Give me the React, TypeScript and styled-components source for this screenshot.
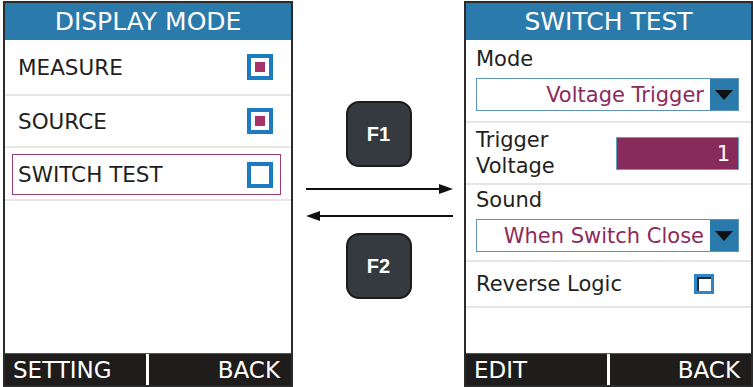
import React from "react";
import styled, { createGlobalStyle } from "styled-components";

const GlobalStyle = createGlobalStyle`
  html, body {
    margin: 0;
    padding: 0;
    background: #ffffff;
  }
  body {
    font-family: "DejaVu Sans", Verdana, sans-serif;
    color: #231f20;
  }
`;

const Page = styled.div`
  display: flex;
  width: 753px;
  height: 387px;
  padding-top: 1px;
  box-sizing: border-box;
  overflow: hidden;
`;

const Screen = styled.div<{ $left: number; $width: number }>`
  display: flex;
  flex-direction: column;
  margin-left: ${(p) => p.$left}px;
  width: ${(p) => p.$width}px;
  height: 386px;
  border: 2px solid #2b2b2b;
  box-sizing: border-box;
  background: #ffffff;
`;

const Header = styled.div`
  height: 37px;
  background: #2a7aab;
  color: #ffffff;
  font-size: 25px;
  line-height: 38px;
  text-align: center;
  flex-shrink: 0;
`;

const Body = styled.div`
  flex: 1;
  display: flex;
  flex-direction: column;
`;

const Row = styled.div<{ $height: number }>`
  display: flex;
  align-items: center;
  justify-content: space-between;
  height: ${(p) => p.$height}px;
  padding: 0 18px 0 13px;
  border-bottom: 2px solid #e6e6e6;
  box-sizing: border-box;
  font-size: 21.5px;
  flex-shrink: 0;
`;

const Highlight = styled.div`
  flex: 1;
  display: flex;
  align-items: center;
  justify-content: space-between;
  height: 41px;
  margin: 2px -8px 0 -6px;
  padding: 0 7px 0 5px;
  border: 1.5px solid #9b3d70;
  box-sizing: border-box;
`;

const Radio = styled.div<{ $checked: boolean }>`
  width: 26px;
  height: 26px;
  border: 4px solid #1b7cc3;
  box-sizing: border-box;
  display: flex;
  align-items: center;
  justify-content: center;

  &::after {
    content: "";
    width: 10px;
    height: 10px;
    background: ${(p) => (p.$checked ? "#a8326a" : "transparent")};
  }
`;

const Footer = styled.div`
  display: flex;
  height: 31px;
  background: #1f1c1c;
  border-top: 1px solid #5a5757;
  color: #ffffff;
  font-size: 23px;
  line-height: 32px;
  flex-shrink: 0;
`;

const SoftKey = styled.div<{ $align: "left" | "right"; $width?: number }>`
  ${(p) => (p.$width ? `width: ${p.$width}px;` : "flex: 1;")}
  text-align: ${(p) => p.$align};
  padding: ${(p) => (p.$align === "left" ? "0 0 0 8px" : "0 11px 0 0")};
  box-sizing: border-box;
  & + & {
    border-left: 3px solid #ffffff;
  }
`;

const Middle = styled.div`
  width: 171px;
  display: flex;
  flex-direction: column;
  align-items: center;
  padding-top: 100px;
  box-sizing: border-box;
`;

const Key = styled.div`
  width: 66px;
  height: 66px;
  border: 2px solid #1c1a1a;
  border-radius: 13px;
  background: #343a3f;
  box-sizing: border-box;
  display: flex;
  align-items: center;
  justify-content: center;
  color: #ffffff;
  font-family: "Liberation Sans", Arial, sans-serif;
  font-weight: bold;
  font-size: 20px;
`;

const Arrows = styled.svg`
  display: block;
  margin: 8px 0 12px 0;
`;

const Section = styled.div<{ $height: number; $top: number }>`
  display: flex;
  flex-direction: column;
  height: ${(p) => p.$height}px;
  padding: ${(p) => p.$top}px 12px 0 10px;
  border-bottom: 2px solid #e6e6e6;
  font-size: 21px;
  box-sizing: border-box;
  flex-shrink: 0;
`;

const Label = styled.div`
  line-height: 26px;
`;

const Select = styled.div`
  display: flex;
  height: 33px;
  margin-top: 6px;
  border: 1px solid #5d93bb;
  box-sizing: border-box;
`;

const SelectValue = styled.div`
  flex: 1;
  text-align: right;
  padding-right: 6px;
  color: #8b2a5c;
  font-size: 21px;
  line-height: 32px;
`;

const SelectArrow = styled.div`
  width: 28px;
  background: #2a7aab;
  display: flex;
  align-items: center;
  justify-content: center;

  &::after {
    content: "";
    border-left: 9px solid transparent;
    border-right: 9px solid transparent;
    border-top: 10px solid #111111;
  }
`;

const InlineSection = styled.div<{ $height: number }>`
  display: flex;
  align-items: center;
  justify-content: space-between;
  height: ${(p) => p.$height}px;
  padding: 0 12px 0 10px;
  border-bottom: 2px solid #e6e6e6;
  font-size: 21px;
  box-sizing: border-box;
  flex-shrink: 0;
`;

const NumberField = styled.div`
  width: 123px;
  height: 33px;
  background: #872c5a;
  border: 1px solid #6a9fc4;
  box-sizing: border-box;
  color: #ffffff;
  text-align: right;
  padding-right: 8px;
  line-height: 32px;
`;

const Check = styled.div`
  width: 20px;
  height: 20px;
  margin-right: 25px;
  border: 3px solid #2f86c6;
  box-shadow: inset 2px 2px 0 #1f2a33;
  background: #ffffff;
  box-sizing: border-box;
`;

const Spacer = styled.div`
  flex: 1;
`;

const App = () => (
  <>
    <GlobalStyle />
    <Page>
      <Screen $left={3} $width={290}>
        <Header>DISPLAY MODE</Header>
        <Body>
          <Row $height={56}>
            MEASURE
            <Radio $checked />
          </Row>
          <Row $height={52}>
            SOURCE
            <Radio $checked />
          </Row>
          <Row $height={53}>
            <Highlight>
              SWITCH TEST
              <Radio $checked={false} />
            </Highlight>
          </Row>
          <Spacer />
        </Body>
        <Footer>
          <SoftKey $align="left" $width={141}>SETTING</SoftKey>
          <SoftKey $align="right">BACK</SoftKey>
        </Footer>
      </Screen>

      <Middle>
        <Key>F1</Key>
        <Arrows width="150" height="46" viewBox="0 0 150 46">
          <line x1="2" y1="14" x2="138" y2="14" stroke="#111" strokeWidth="2" />
          <polygon points="149,14 135,9 135,19" fill="#111" />
          <line x1="12" y1="41" x2="149" y2="41" stroke="#111" strokeWidth="2" />
          <polygon points="2,41 16,36 16,46" fill="#111" />
        </Arrows>
        <Key>F2</Key>
      </Middle>

      <Screen $left={0} $width={289}>
        <Header>SWITCH TEST</Header>
        <Body>
          <Section $height={83} $top={6}>
            <Label>Mode</Label>
            <Select>
              <SelectValue>Voltage Trigger</SelectValue>
              <SelectArrow />
            </Select>
          </Section>
          <InlineSection $height={62}>
            <Label>
              Trigger
              <br />
              Voltage
            </Label>
            <NumberField>1</NumberField>
          </InlineSection>
          <Section $height={77} $top={2}>
            <Label>Sound</Label>
            <Select>
              <SelectValue>When Switch Close</SelectValue>
              <SelectArrow />
            </Select>
          </Section>
          <InlineSection $height={46}>
            Reverse Logic
            <Check />
          </InlineSection>
          <Spacer />
        </Body>
        <Footer>
          <SoftKey $align="left" $width={141}>EDIT</SoftKey>
          <SoftKey $align="right">BACK</SoftKey>
        </Footer>
      </Screen>
    </Page>
  </>
);

export default App;
